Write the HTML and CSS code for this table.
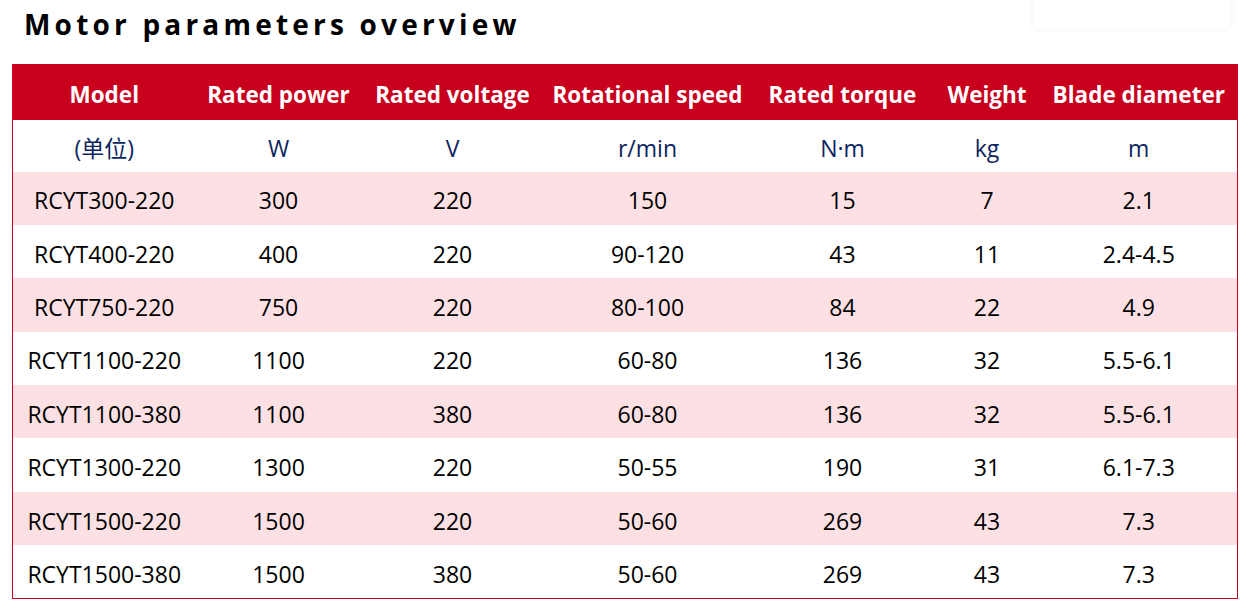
FILE: index.html
```html
<!DOCTYPE html>
<html>
<head>
<meta charset="utf-8">
<link rel="stylesheet" href="styles.css">
</head>
<body>
<div class="page">
  <div class="search-box"></div>
  <h1 class="title">Motor parameters overview</h1>
  <table class="params">
    <colgroup>
      <col class="c1"><col class="c2"><col class="c3"><col class="c4"><col class="c5"><col class="c6"><col class="c7">
    </colgroup>
    <thead>
      <tr class="head">
        <th>Model</th><th>Rated power</th><th>Rated voltage</th><th>Rotational speed</th><th>Rated torque</th><th>Weight</th><th>Blade diameter</th>
      </tr>
    </thead>
    <tbody>
      <tr class="unit"><td>(单位)</td><td>W</td><td>V</td><td>r/min</td><td>N·m</td><td>kg</td><td>m</td></tr>
      <tr class="pink"><td>RCYT300-220</td><td>300</td><td>220</td><td>150</td><td>15</td><td>7</td><td>2.1</td></tr>
      <tr><td>RCYT400-220</td><td>400</td><td>220</td><td>90-120</td><td>43</td><td>11</td><td>2.4-4.5</td></tr>
      <tr class="pink"><td>RCYT750-220</td><td>750</td><td>220</td><td>80-100</td><td>84</td><td>22</td><td>4.9</td></tr>
      <tr><td>RCYT1100-220</td><td>1100</td><td>220</td><td>60-80</td><td>136</td><td>32</td><td>5.5-6.1</td></tr>
      <tr class="pink"><td>RCYT1100-380</td><td>1100</td><td>380</td><td>60-80</td><td>136</td><td>32</td><td>5.5-6.1</td></tr>
      <tr><td>RCYT1300-220</td><td>1300</td><td>220</td><td>50-55</td><td>190</td><td>31</td><td>6.1-7.3</td></tr>
      <tr class="pink"><td>RCYT1500-220</td><td>1500</td><td>220</td><td>50-60</td><td>269</td><td>43</td><td>7.3</td></tr>
      <tr><td>RCYT1500-380</td><td>1500</td><td>380</td><td>50-60</td><td>269</td><td>43</td><td>7.3</td></tr>
    </tbody>
  </table>
</div>
</body>
</html>
```

FILE: styles.css
```css
html, body {
  margin: 0;
  padding: 0;
  background: #ffffff;
}
.page {
  position: relative;
  width: 1249px;
  height: 610px;
  overflow: hidden;
  font-family: "Open Sans", "Noto Sans CJK SC", sans-serif;
}
.search-box {
  position: absolute;
  left: 1033px;
  top: -20px;
  width: 197px;
  height: 49px;
  background: #fff;
  box-shadow: 0 0 6px rgba(0, 0, 0, 0.06);
}
.title {
  margin: 0;
  padding: 4px 0 0 24px;
  height: 60px;
  box-sizing: border-box;
  font-size: 28px;
  line-height: 40px;
  font-weight: 700;
  letter-spacing: 4.2px;
  color: #000;
}
.params {
  margin-left: 12px;
  width: 1225px;
  margin-top: 4px;
  border-collapse: collapse;
  table-layout: fixed;
  border: 1px solid #c8001e;
}
.c1 { width: 183px; }
.c2 { width: 166px; }
.c3 { width: 182px; }
.c4 { width: 208px; }
.c5 { width: 182px; }
.c6 { width: 107px; }
.c7 { width: 197px; }
.params th, .params td {
  padding: 4px 0 0;
  text-align: center;
  white-space: nowrap;
  font-size: 23px;
  line-height: 30px;
}
.head {
  background: #c8001e;
  height: 55px;
}
.head th {
  color: #fff;
  font-weight: 700;
  font-size: 22.5px;
  padding-top: 5px;
}
.unit {
  height: 52px;
}
.unit td {
  color: #0d2560;
}
.params tbody tr:not(.unit) {
  height: 53.4px;
}
.params tbody tr:not(.unit) td {
  color: #000;
}
.pink {
  background: #fde0e4;
}
```
